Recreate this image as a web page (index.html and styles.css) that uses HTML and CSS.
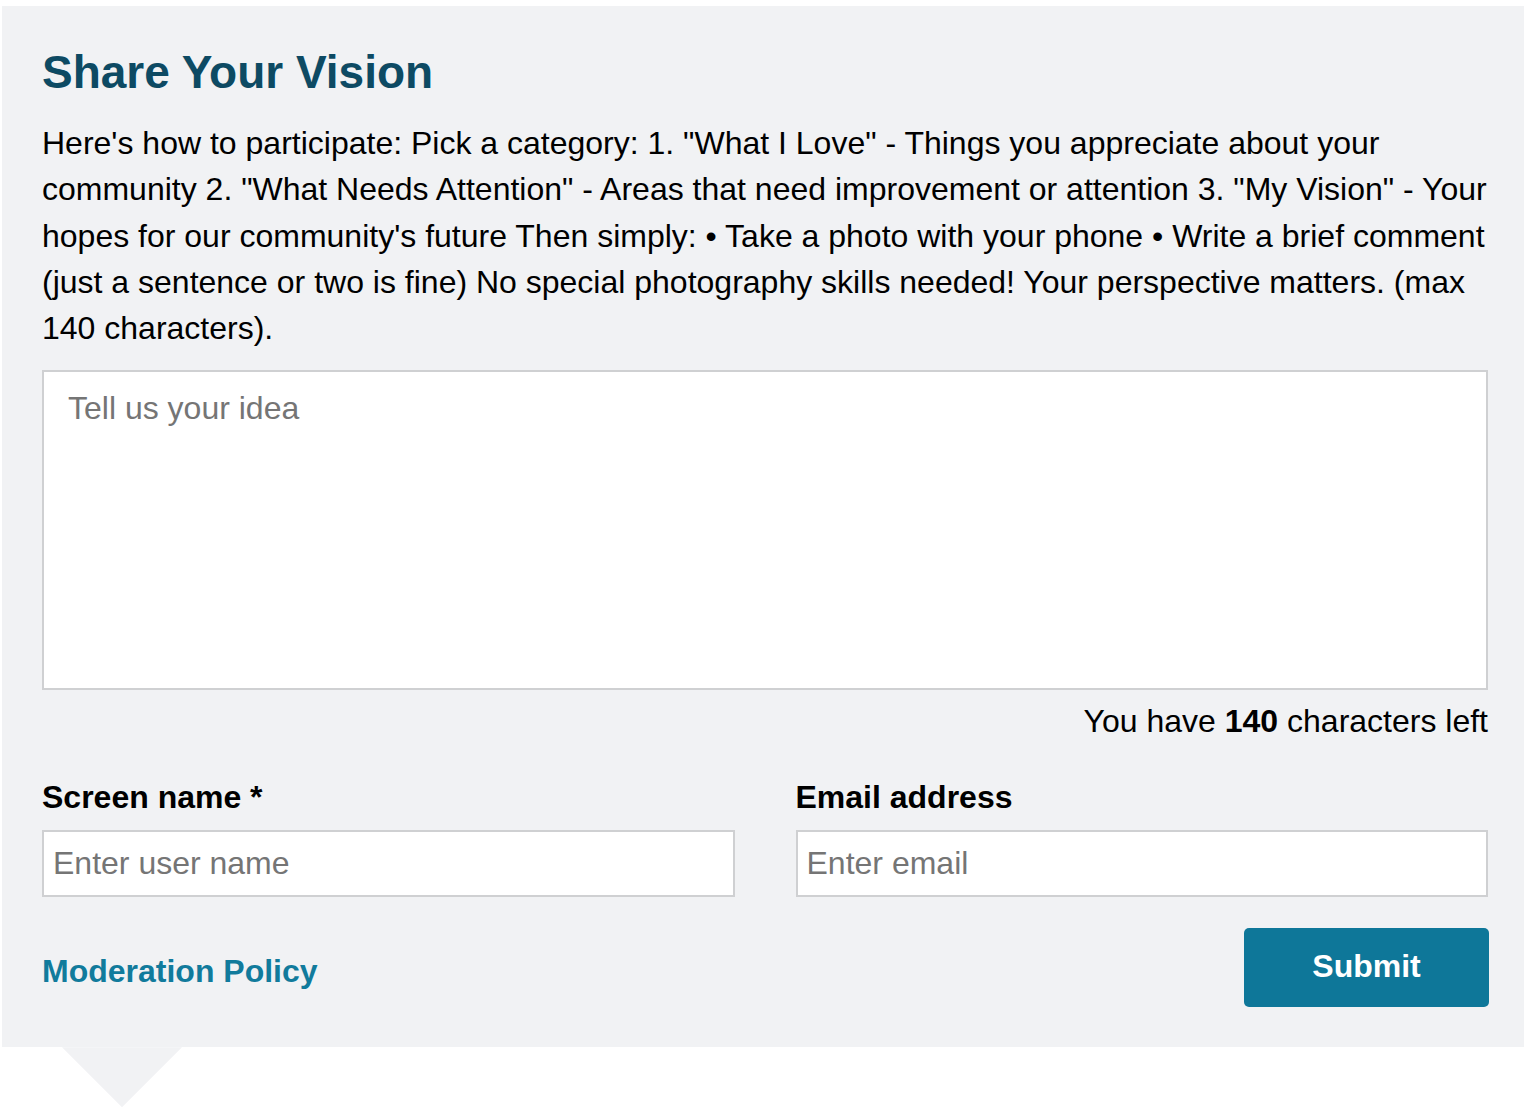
FILE: index.html
```html
<!DOCTYPE html>
<html lang="en">
<head>
<meta charset="utf-8">
<title>Share Your Vision</title>
<link rel="stylesheet" href="styles.css">
</head>
<body>
<div class="wrap">
  <form class="panel">
    <h1 class="title">Share Your Vision</h1>
    <p class="intro">
      <span class="line">Here's how to participate: Pick a category: 1. "What I Love" - Things you appreciate about your</span>
      <span class="line">community 2. "What Needs Attention" - Areas that need improvement or attention 3. "My Vision" - Your</span>
      <span class="line">hopes for our community's future Then simply: • Take a photo with your phone • Write a brief comment</span>
      <span class="line">(just a sentence or two is fine) No special photography skills needed! Your perspective matters. (max</span>
      <span class="line">140 characters).</span>
    </p>
    <textarea class="idea" placeholder="Tell us your idea"></textarea>
    <div class="counter">You have <strong>140</strong> characters left</div>
    <div class="fields">
      <label class="field">
        <span class="label">Screen name *</span>
        <input class="input" type="text" placeholder="Enter user name">
      </label>
      <label class="field">
        <span class="label">Email address</span>
        <input class="input" type="email" placeholder="Enter email">
      </label>
    </div>
    <div class="actions">
      <a class="policy" href="#">Moderation Policy</a>
      <button class="submit" type="button">Submit</button>
    </div>
  </form>
  <div class="pointer"></div>
</div>
</body>
</html>
```

FILE: styles.css
```css
* { box-sizing: border-box; }
html, body { margin: 0; padding: 0; background: #ffffff; }
body { font-family: "Liberation Sans", Arial, Helvetica, sans-serif; color: #000; }

.wrap { padding: 6px 0 0 2px; }

.panel {
  display: flex;
  flex-direction: column;
  background: #f1f2f4;
  padding: 40px 36px 40px 40px;
  width: 1522px;
}

.pointer {
  width: 120px;
  height: 60px;
  margin-left: 60px;
  background: #f1f2f4;
  clip-path: polygon(0 0, 100% 0, 50% 100%);
}

.title {
  margin: 0;
  font-size: 46px;
  line-height: 52px;
  font-weight: 700;
  color: #0d4a63;
}

.intro {
  margin: 22px 0 0;
  font-size: 32px;
  line-height: 46.25px;
}
.line { display: block; white-space: nowrap; }

.idea {
  display: block;
  margin-top: 19px;
  width: 100%;
  height: 320px;
  border: 2px solid #cfd0d2;
  border-radius: 0;
  background: #fff;
  padding: 18px 24px;
  font-family: inherit;
  font-size: 32px;
  line-height: 36px;
  resize: none;
  outline: none;
}
.idea::placeholder { color: #757575; }

.counter {
  margin-top: 13px;
  text-align: right;
  font-size: 32px;
  line-height: 36px;
}
.counter strong { font-weight: 700; }

.fields {
  margin-top: 40px;
  display: grid;
  grid-template-columns: 1fr 1fr;
  column-gap: 61px;
}
.field { display: flex; flex-direction: column; }
.label {
  font-size: 32px;
  font-weight: 700;
  line-height: 36px;
}
.input {
  margin-top: 15px;
  height: 67px;
  width: 100%;
  border: 2px solid #cfd0d2;
  border-radius: 0;
  background: #fff;
  padding: 0 9px;
  font-family: inherit;
  font-size: 32px;
  outline: none;
}
.input::placeholder { color: #757575; }

.actions {
  margin-top: 31px;
  display: flex;
  justify-content: space-between;
  align-items: center;
}
.policy {
  margin-top: 8px;
  font-size: 32px;
  font-weight: 700;
  color: #117b9c;
  text-decoration: none;
}
.submit {
  width: 245px;
  height: 79px;
  margin-right: -1px;
  border: 0;
  border-radius: 5px;
  background: #0e7799;
  color: #fff;
  font-family: inherit;
  font-size: 32px;
  font-weight: 700;
  padding: 0 0 2px;
}
```
